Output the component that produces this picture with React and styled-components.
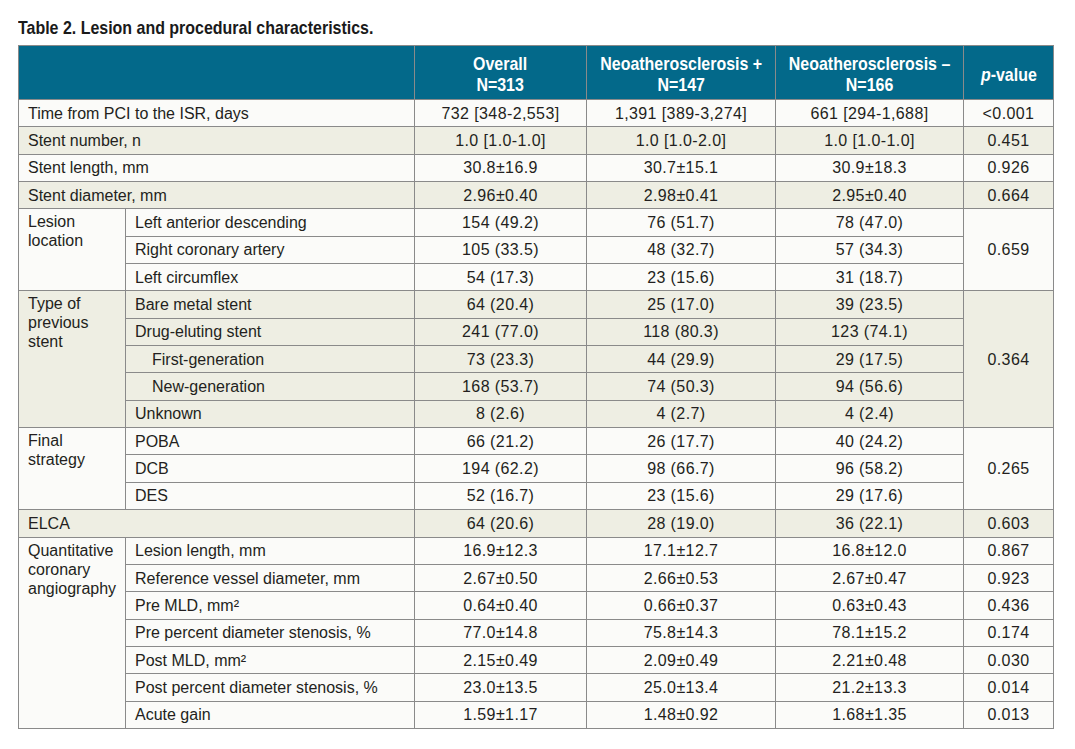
import styled, { createGlobalStyle } from 'styled-components'

const GlobalStyle = createGlobalStyle`
    html, body {
        margin: 0;
        padding: 0;
        background: #ffffff;
    }
    body {
        font-family: "Liberation Sans", Arial, sans-serif;
        color: #231f20;
    }
`

const Page = styled.div`
    width: 1075px;
    height: 749px;
    padding: 18px 0 0 18px;
    box-sizing: border-box;
    background: #ffffff;
`

const Title = styled.h1`
    margin: 0 0 7px 0;
    font-family: "Liberation Sans", Arial, sans-serif;
    font-weight: 700;
    font-size: 19px;
    line-height: 20px;
    color: #1a1a1a;
    white-space: nowrap;
`

// the original typeface is a bold condensed grotesque; squeeze a regular bold
const Narrow = styled.span`
    display: inline-block;
    white-space: nowrap;
    transform: scaleX(${(props) => props.$scale ?? 0.84});
    transform-origin: left center;
`

const HeadText = styled.span`
    display: block;
    width: 130%;
    margin-left: -15%;
    padding-top: 3px;
    white-space: nowrap;
    text-align: center;
    transform: scaleX(0.84);
`

const Table = styled.table`
    width: 1035px;
    table-layout: fixed;
    border-collapse: collapse;
    border: 1px solid #8a8a8a;
    font-size: 16px;
`

const HeadRow = styled.tr`
    height: 54px;
    background: #03698a;
`

const HeadCell = styled.th`
    padding: 0;
    font-family: "Liberation Sans", Arial, sans-serif;
    font-weight: 700;
    font-size: 19px;
    line-height: 21px;
    color: #ffffff;
    text-align: center;
    vertical-align: middle;
    border: 1px solid #8a8a8a;
    border-left: 1px solid #8fb4c4;
    &:first-child {
        border-left: 1px solid #8a8a8a;
    }
`

const Row = styled.tr`
    height: 27.35px;
    background: ${(props) => (props.$shade ? '#eeeee3' : '#fbfbf9')};
`

const Cell = styled.td`
    padding: 0 9px 0 ${(props) => (props.$indent ? '26px' : '9px')};
    text-align: ${(props) => (props.$center ? 'center' : 'left')};
    vertical-align: ${(props) => (props.$top ? 'top' : 'middle')};
    line-height: 21px;
    border: 1px solid #8a8a8a;
    white-space: nowrap;
    padding-top: ${(props) => (props.$top ? '3px' : '0')};
    ${(props) => props.$center && 'letter-spacing: 0.4px;'}
    ${(props) => props.$group && 'white-space: normal; line-height: 19px;'}
`

const Italic = styled.i`
    font-style: italic;
`

const data = [
    { label: 'Time from PCI to the ISR, days', values: ['732 [348-2,553]', '1,391 [389-3,274]', '661 [294-1,688]'], p: '<0.001' },
    { label: 'Stent number, n', values: ['1.0 [1.0-1.0]', '1.0 [1.0-2.0]', '1.0 [1.0-1.0]'], p: '0.451' },
    { label: 'Stent length, mm', values: ['30.8±16.9', '30.7±15.1', '30.9±18.3'], p: '0.926' },
    { label: 'Stent diameter, mm', values: ['2.96±0.40', '2.98±0.41', '2.95±0.40'], p: '0.664' },
    {
        group: 'Lesion location',
        p: '0.659',
        items: [
            { label: 'Left anterior descending', values: ['154 (49.2)', '76 (51.7)', '78 (47.0)'] },
            { label: 'Right coronary artery', values: ['105 (33.5)', '48 (32.7)', '57 (34.3)'] },
            { label: 'Left circumflex', values: ['54 (17.3)', '23 (15.6)', '31 (18.7)'] },
        ],
    },
    {
        group: 'Type of previous stent',
        p: '0.364',
        items: [
            { label: 'Bare metal stent', values: ['64 (20.4)', '25 (17.0)', '39 (23.5)'] },
            { label: 'Drug-eluting stent', values: ['241 (77.0)', '118 (80.3)', '123 (74.1)'] },
            { label: 'First-generation', indent: true, values: ['73 (23.3)', '44 (29.9)', '29 (17.5)'] },
            { label: 'New-generation', indent: true, values: ['168 (53.7)', '74 (50.3)', '94 (56.6)'] },
            { label: 'Unknown', values: ['8 (2.6)', '4 (2.7)', '4 (2.4)'] },
        ],
    },
    {
        group: 'Final strategy',
        p: '0.265',
        items: [
            { label: 'POBA', values: ['66 (21.2)', '26 (17.7)', '40 (24.2)'] },
            { label: 'DCB', values: ['194 (62.2)', '98 (66.7)', '96 (58.2)'] },
            { label: 'DES', values: ['52 (16.7)', '23 (15.6)', '29 (17.6)'] },
        ],
    },
    { label: 'ELCA', values: ['64 (20.6)', '28 (19.0)', '36 (22.1)'], p: '0.603' },
    {
        group: 'Quantitative coronary angiography',
        items: [
            { label: 'Lesion length, mm', values: ['16.9±12.3', '17.1±12.7', '16.8±12.0'], p: '0.867' },
            { label: 'Reference vessel diameter, mm', values: ['2.67±0.50', '2.66±0.53', '2.67±0.47'], p: '0.923' },
            { label: 'Pre MLD, mm²', values: ['0.64±0.40', '0.66±0.37', '0.63±0.43'], p: '0.436' },
            { label: 'Pre percent diameter stenosis, %', values: ['77.0±14.8', '75.8±14.3', '78.1±15.2'], p: '0.174' },
            { label: 'Post MLD, mm²', values: ['2.15±0.49', '2.09±0.49', '2.21±0.48'], p: '0.030' },
            { label: 'Post percent diameter stenosis, %', values: ['23.0±13.5', '25.0±13.4', '21.2±13.3'], p: '0.014' },
            { label: 'Acute gain', values: ['1.59±1.17', '1.48±0.92', '1.68±1.35'], p: '0.013' },
        ],
    },
]

const columns = [
    { title: 'Overall', n: 'N=313' },
    { title: 'Neoatherosclerosis +', n: 'N=147' },
    { title: 'Neoatherosclerosis –', n: 'N=166' },
]

function Values({ values }) {
    return values.map((v, i) => (
        <Cell key={i} $center>
            {v}
        </Cell>
    ))
}

function renderSection(section, index) {
    const shade = index % 2 === 1
    if (!section.group) {
        return (
            <Row key={index} $shade={shade}>
                <Cell colSpan={2}>{section.label}</Cell>
                <Values values={section.values} />
                <Cell $center>{section.p}</Cell>
            </Row>
        )
    }
    return section.items.map((item, i) => (
        <Row key={`${index}-${i}`} $shade={shade}>
            {i === 0 && (
                <Cell rowSpan={section.items.length} $top $group>
                    {section.group}
                </Cell>
            )}
            <Cell $indent={item.indent}>{item.label}</Cell>
            <Values values={item.values} />
            {item.p ? (
                <Cell $center>{item.p}</Cell>
            ) : (
                i === 0 && (
                    <Cell $center rowSpan={section.items.length}>
                        {section.p}
                    </Cell>
                )
            )}
        </Row>
    ))
}

export default function App() {
    return (
        <Page>
            <GlobalStyle />
            <Title>
                <Narrow $scale={0.84}>Table 2. Lesion and procedural characteristics.</Narrow>
            </Title>
            <Table>
                <colgroup>
                    <col style={{ width: 107 }} />
                    <col style={{ width: 289 }} />
                    <col style={{ width: 172 }} />
                    <col style={{ width: 189 }} />
                    <col style={{ width: 188 }} />
                    <col style={{ width: 90 }} />
                </colgroup>
                <thead>
                    <HeadRow>
                        <HeadCell colSpan={2}></HeadCell>
                        {columns.map((c) => (
                            <HeadCell key={c.n}>
                                <HeadText>
                                    {c.title}
                                    <br />
                                    {c.n}
                                </HeadText>
                            </HeadCell>
                        ))}
                        <HeadCell>
                            <HeadText>
                                <Italic>p</Italic>-value
                            </HeadText>
                        </HeadCell>
                    </HeadRow>
                </thead>
                <tbody>{data.map(renderSection)}</tbody>
            </Table>
        </Page>
    )
}
